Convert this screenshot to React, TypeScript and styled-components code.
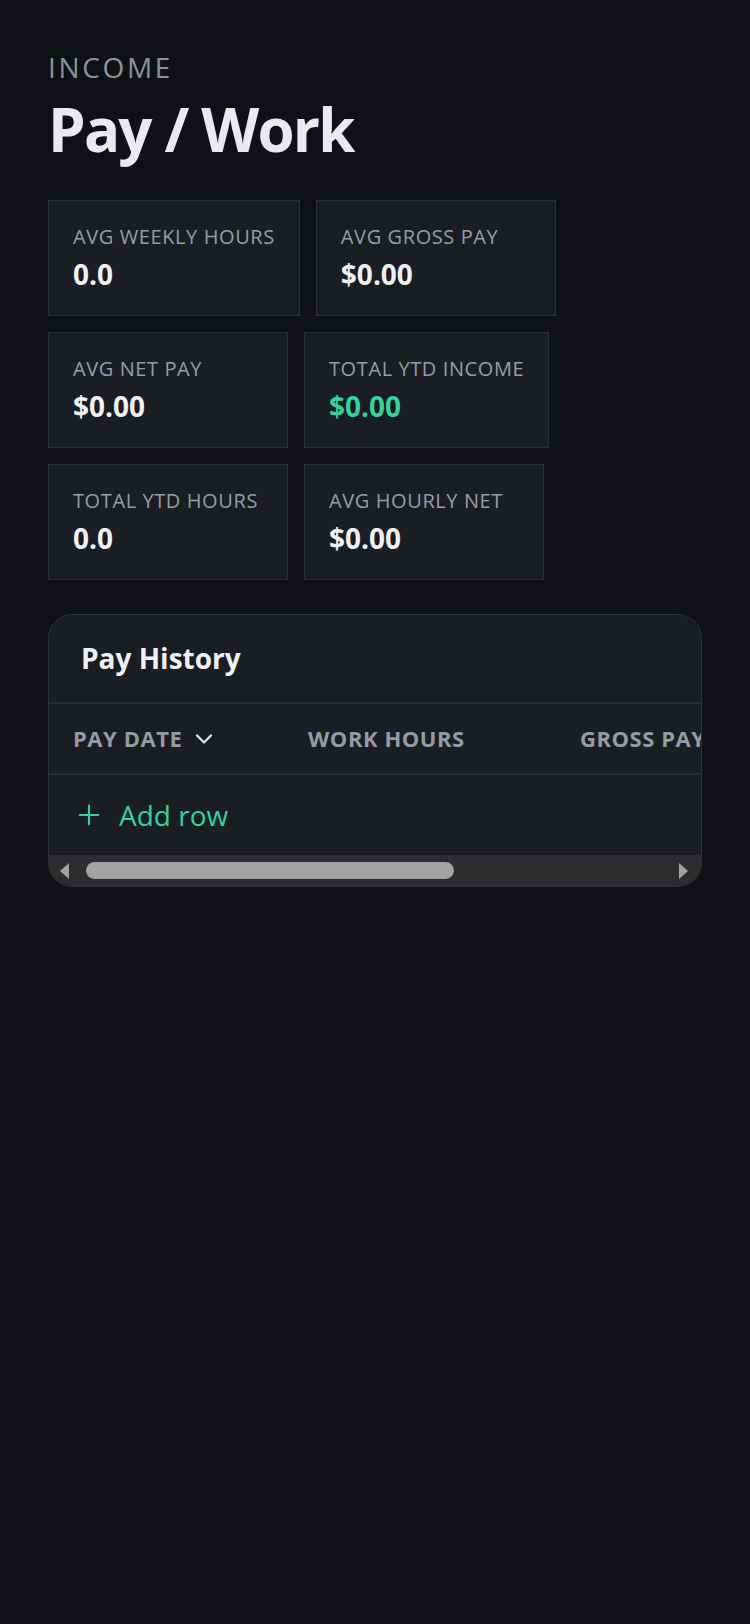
import { createGlobalStyle, styled } from "styled-components";
import { ChevronDown, Plus } from "lucide-react";

const GlobalStyle = createGlobalStyle`
  html, body {
    margin: 0;
    background: #0f1115;
  }
  body {
    font-family: "Open Sans", "Noto Sans", sans-serif;
    color: #e8eaee;
  }
  * {
    box-sizing: border-box;
  }
`;

const stats = [
  { label: "Avg Weekly Hours", value: "0.0" },
  { label: "Avg Gross Pay", value: "$0.00" },
  { label: "Avg Net Pay", value: "$0.00" },
  { label: "Total YTD Income", value: "$0.00", accent: true },
  { label: "Total YTD Hours", value: "0.0" },
  { label: "Avg Hourly Net", value: "$0.00" },
];

const columns = [
  { title: "Pay Date", width: 235, sorted: true },
  { title: "Work Hours", width: 272 },
  { title: "Gross Pay", width: 220 },
  { title: "Net Pay", width: 220 },
  { title: "Notes", width: 220 },
];

const App = () => {
  return (
    <>
      <GlobalStyle />
      <Page>
        <Eyebrow>Income</Eyebrow>
        <Title>Pay / Work</Title>

        <StatGrid>
          {stats.map((s) => (
            <StatCard key={s.label}>
              <StatLabel>{s.label}</StatLabel>
              <StatValue $accent={s.accent}>{s.value}</StatValue>
            </StatCard>
          ))}
        </StatGrid>

        <HistoryCard>
          <HistoryHeader>
            <HistoryTitle>Pay History</HistoryTitle>
          </HistoryHeader>
          <TableViewport>
            <HeaderRow>
              {columns.map((c) => (
                <HeaderCell key={c.title} $width={c.width}>
                  {c.title}
                  {c.sorted && <ChevronDown size={28} strokeWidth={2} />}
                </HeaderCell>
              ))}
            </HeaderRow>
            <AddRowButton type="button">
              <Plus size={32} strokeWidth={1.6} />
              Add row
            </AddRowButton>
          </TableViewport>
          <Scrollbar>
            <Arrow $dir="left" />
            <Thumb />
            <Arrow $dir="right" />
          </Scrollbar>
        </HistoryCard>
      </Page>
    </>
  );
};

export default App;

const Page = styled.main`
  min-height: 1624px;
  padding: 50px 48px 48px;
`;

const Eyebrow = styled.div`
  font-size: 28px;
  line-height: 34px;
  letter-spacing: 0.095em;
  text-transform: uppercase;
  color: #8b919a;
`;

const Title = styled.h1`
  margin: 12px 0 38px;
  font-size: 60px;
  line-height: 66px;
  font-weight: 700;
  letter-spacing: -0.03em;
  color: #e8eaee;
`;

const StatGrid = styled.div`
  display: flex;
  flex-wrap: wrap;
  gap: 16px;
  margin-bottom: 34px;
`;

const StatCard = styled.div`
  min-width: 240px;
  padding: 24px;
  background: #1a1d22;
  border: 1px solid #2c3037;
`;

const StatLabel = styled.div`
  font-size: 20px;
  line-height: 24px;
  letter-spacing: 0.03em;
  text-transform: uppercase;
  color: #979da6;
  white-space: nowrap;
`;

const StatValue = styled.div<{ $accent?: boolean }>`
  margin-top: 8px;
  font-size: 28px;
  line-height: 34px;
  font-weight: 700;
  color: ${(p) => (p.$accent ? "#34d399" : "#eef0f3")};
`;

const HistoryCard = styled.section`
  background: #1a1d22;
  border: 1px solid #2c3037;
  border-radius: 24px;
  overflow: hidden;
`;

const HistoryHeader = styled.header`
  padding: 24px 32px 25px;
  border-bottom: 2px solid #2a2e34;
`;

const HistoryTitle = styled.h2`
  margin: 0;
  font-size: 28px;
  line-height: 38px;
  font-weight: 700;
  color: #eef0f3;
`;

const TableViewport = styled.div`
  overflow: hidden;
`;

const HeaderRow = styled.div`
  display: flex;
  width: max-content;
  min-width: 100%;
  border-bottom: 2px solid #2a2e34;
`;

const HeaderCell = styled.div<{ $width: number }>`
  display: flex;
  align-items: center;
  gap: 8px;
  flex: 0 0 ${(p) => p.$width}px;
  height: 69px;
  padding: 0 24px 1px;
  font-size: 22px;
  font-weight: 700;
  letter-spacing: 0.025em;
  text-transform: uppercase;
  color: #959ba5;
  white-space: nowrap;

  svg {
    color: #dfe2e6;
    margin-top: 2px;
  }
`;

const AddRowButton = styled.button`
  display: flex;
  align-items: center;
  gap: 14px;
  width: 100%;
  height: 80px;
  padding: 0 24px;
  border: none;
  background: transparent;
  font-family: inherit;
  font-size: 28px;
  line-height: 34px;
  color: #34d399;
  cursor: pointer;
`;

const Scrollbar = styled.div`
  display: flex;
  align-items: center;
  height: 31px;
  padding: 0 13px 0 11px;
  background: #2d2d2e;
`;

const Arrow = styled.span<{ $dir: "left" | "right" }>`
  width: 0;
  height: 0;
  border-top: 8.5px solid transparent;
  border-bottom: 8.5px solid transparent;
  ${(p) =>
    p.$dir === "left"
      ? "border-right: 9px solid #a3a3a3;"
      : "border-left: 9px solid #a3a3a3; margin-left: auto;"}
`;

const Thumb = styled.span`
  width: 368px;
  height: 17px;
  margin-left: 17px;
  border-radius: 9px;
  background: #a3a3a3;
`;
